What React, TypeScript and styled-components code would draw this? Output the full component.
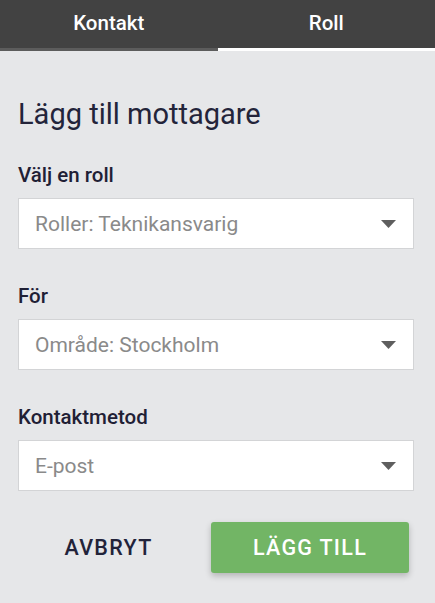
import React from "react";
import styled, { createGlobalStyle } from "styled-components";

const Global = createGlobalStyle`
  html, body { margin: 0; padding: 0; background: #e6e7e9; }
  body { font-family: Roboto, "Noto Sans", Arial, sans-serif; }
  * { box-sizing: border-box; }
`;

const Page = styled.div`
  width: 435px;
  min-height: 603px;
  background: #e6e7e9;
  display: flex;
  flex-direction: column;
`;

const TabBar = styled.div`
  display: flex;
  background: #424242;
  height: 51px;
`;

const Tab = styled.div<{ $active?: boolean }>`
  flex: 1;
  display: flex;
  align-items: center;
  justify-content: center;
  color: #ffffff;
  font-size: 20.5px;
  font-weight: 500;
  padding-bottom: 2px;
  border-bottom: 3px solid ${(p) => (p.$active ? "#ffffff" : "#5c5c5c")};
`;

const Content = styled.div`
  padding: 46px 21px 0 18px;
  display: flex;
  flex-direction: column;
`;

const Title = styled.h1`
  margin: 0 0 32px 0;
  font-size: 29px;
  line-height: 34px;
  font-weight: 400;
  color: #23243a;
`;

const Field = styled.div`
  display: flex;
  flex-direction: column;
  gap: 11px;
  margin-bottom: 35px;
`;

const Label = styled.div`
  font-size: 20.5px;
  line-height: 24px;
  font-weight: 500;
  color: #1f2035;
`;

const Select = styled.div`
  height: 51px;
  background: #ffffff;
  border: 1px solid #d3d4d6;
  display: flex;
  align-items: center;
  justify-content: space-between;
  padding: 0 17px 0 16px;
  color: #8a8a8a;
  font-size: 21px;
`;

const Arrow = styled.svg`
  width: 15px;
  height: 8px;
  display: block;
`;

const Actions = styled.div`
  display: flex;
  align-items: center;
  gap: 12px;
  margin-top: -4px;
`;

const CancelButton = styled.button`
  width: 181px;
  height: 51px;
  background: transparent;
  border: none;
  font-family: inherit;
  font-size: 21.5px;
  font-weight: 500;
  letter-spacing: 1.3px;
  color: #22233a;
  cursor: pointer;
`;

const AddButton = styled.button`
  width: 198px;
  height: 51px;
  background: #72b565;
  border: none;
  border-radius: 3px;
  font-family: inherit;
  font-size: 21.5px;
  font-weight: 500;
  letter-spacing: 1.3px;
  color: #ffffff;
  box-shadow: 0 3px 6px rgba(0, 0, 0, 0.22);
  cursor: pointer;
`;

const Dropdown = ({ value }: { value: string }) => (
  <Select>
    <span>{value}</span>
    <Arrow viewBox="0 0 15 8">
      <path d="M0 0 H15 L7.5 8 Z" fill="#5e5e5e" />
    </Arrow>
  </Select>
);

export default function App() {
  return (
    <Page>
      <Global />
      <TabBar>
        <Tab>Kontakt</Tab>
        <Tab $active>Roll</Tab>
      </TabBar>
      <Content>
        <Title>Lägg till mottagare</Title>
        <Field>
          <Label>Välj en roll</Label>
          <Dropdown value="Roller: Teknikansvarig" />
        </Field>
        <Field>
          <Label>För</Label>
          <Dropdown value="Område: Stockholm" />
        </Field>
        <Field>
          <Label>Kontaktmetod</Label>
          <Dropdown value="E-post" />
        </Field>
        <Actions>
          <CancelButton>AVBRYT</CancelButton>
          <AddButton>LÄGG TILL</AddButton>
        </Actions>
      </Content>
    </Page>
  );
}
